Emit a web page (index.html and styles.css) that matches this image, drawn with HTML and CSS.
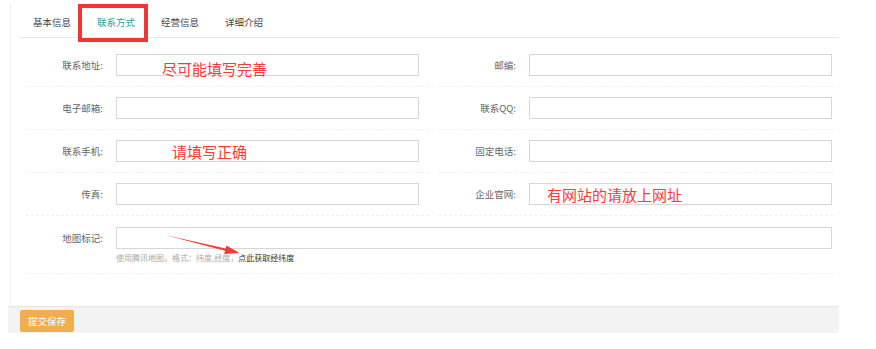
FILE: index.html
```html
<!DOCTYPE html>
<html lang="zh-CN">
<head>
    <meta charset="UTF-8">
    <meta name="viewport" content="width=device-width, initial-scale=1.0">
    <title>联系方式</title>
    <link rel="stylesheet" href="styles.css">
</head>
<body>
    <div class="page">
        <div class="panel">
            <ul class="tabs">
                <li>基本信息</li>
                <li class="active">联系方式<span class="mark"></span></li>
                <li>经营信息</li>
                <li>详细介绍</li>
            </ul>
            <div class="form">
                <div class="grid">
                    <div class="field">
                        <label>联系地址:</label>
                        <div class="control"><input type="text"><span class="note note-addr">尽可能填写完善</span></div>
                    </div>
                    <div class="field">
                        <label>邮编:</label>
                        <div class="control"><input type="text"></div>
                    </div>
                    <div class="field">
                        <label>电子邮箱:</label>
                        <div class="control"><input type="text"></div>
                    </div>
                    <div class="field">
                        <label>联系QQ:</label>
                        <div class="control"><input type="text"></div>
                    </div>
                    <div class="field">
                        <label>联系手机:</label>
                        <div class="control"><input type="text"><span class="note note-phone">请填写正确</span></div>
                    </div>
                    <div class="field">
                        <label>固定电话:</label>
                        <div class="control"><input type="text"></div>
                    </div>
                    <div class="field">
                        <label>传真:</label>
                        <div class="control"><input type="text"></div>
                    </div>
                    <div class="field">
                        <label>企业官网:</label>
                        <div class="control"><input type="text"><span class="note note-site">有网站的请放上网址</span></div>
                    </div>
                    <div class="field field-map">
                        <label>地图标记:</label>
                        <div class="control">
                            <input type="text">
                            <div class="hint">使用腾讯地图。格式：纬度,经度，<a href="#">点此获取经纬度</a></div>
                            <svg class="arrow" width="84" height="27" viewBox="161 232 84 27">
                                <polygon points="165,236 225.7,249.6 226.4,246.6 239.5,254 224.2,255 225,251.8" fill="#f23b3b"/>
                            </svg>
                        </div>
                    </div>
                </div>
            </div>
        </div>
        <div class="footer">
            <button type="button">提交保存</button>
        </div>
    </div>
</body>
</html>
```

FILE: styles.css
```css
* {
    box-sizing: border-box;
}
body {
    margin: 0;
    background: #fff;
    font-family: "Noto Sans CJK SC", "Liberation Sans", sans-serif;
    font-size: 9.5px;
    color: #333;
}
.page {
    width: 839px;
    padding: 4px 0 0 8px;
}
.panel {
    margin-left: 2px;
    border-left: 1px solid #eee;
    padding-bottom: 32px;
}
.tabs {
    list-style: none;
    margin: 0 0 0 9px;
    padding: 3px 0 0 0;
    display: flex;
    border-bottom: 1px solid #e8e8e8;
}
.tabs li {
    position: relative;
    width: 64px;
    height: 30px;
    line-height: 30px;
    padding-left: 13px;
    color: #444;
}
.tabs li.active {
    color: #2f9e91;
}
.mark {
    position: absolute;
    left: -6px;
    top: -3px;
    width: 70px;
    height: 38px;
    border: 4px solid #f03535;
}
.form {
    padding: 6px 0 0 15px;
}
.grid {
    display: grid;
    grid-template-columns: 403px 394px;
    column-gap: 10px;
}
.field {
    display: flex;
    align-items: flex-start;
    padding: 10px 0;
    border-bottom: 1px dashed #efefef;
}
.field label {
    width: 90px;
    padding-right: 13px;
    text-align: right;
    line-height: 22px;
    color: #666;
}
.control {
    position: relative;
}
.control input {
    display: block;
    width: 303px;
    height: 22px;
    border: 1px solid #d6d6d6;
    outline: none;
    padding: 0 6px;
}
.field-map {
    grid-column: 1 / -1;
    padding-top: 11px;
    padding-bottom: 8px;
}
.field-map input {
    width: 716px;
}
.hint {
    margin-top: 2px;
    font-size: 8px;
    line-height: 14px;
    color: #aaa;
}
.hint a {
    color: #333;
    text-decoration: none;
}
.note {
    position: absolute;
    font-size: 15px;
    line-height: 15px;
    color: #f53c3c;
    white-space: nowrap;
}
.note-addr {
    left: 46px;
    top: 7px;
}
.note-phone {
    left: 56px;
    top: 4px;
}
.note-site {
    left: 18px;
    top: 4px;
}
.arrow {
    position: absolute;
    left: 45px;
    top: 4px;
    overflow: visible;
}
.footer {
    background: #f3f3f3;
    border-top: 1px solid #e6e6e6;
    padding: 3px 12px 1px 12px;
}
.footer button {
    display: block;
    height: 22px;
    width: 54px;
    padding: 0;
    border: none;
    border-radius: 2px;
    background: #f0ae4d;
    color: #fff;
    font-family: inherit;
    font-size: 9.5px;
}
```
